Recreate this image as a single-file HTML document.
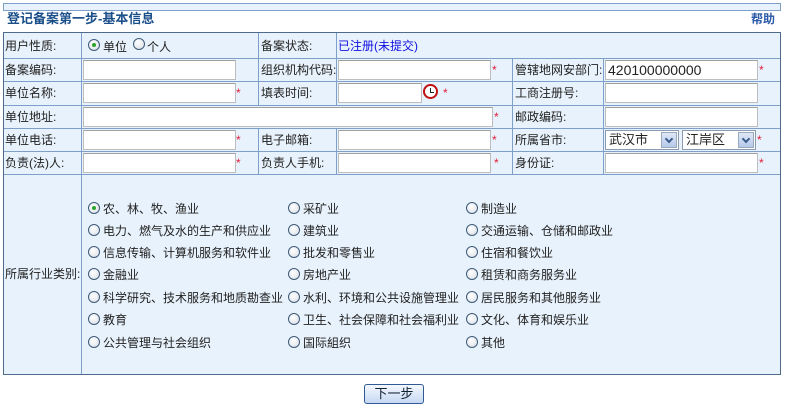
<!DOCTYPE html>
<html><head><meta charset="utf-8"><style>
*{margin:0;padding:0;box-sizing:border-box}
body{width:786px;height:406px;background:#fff;position:relative;font-family:"Liberation Sans","Noto Sans CJK SC","WenQuanYi Zen Hei",sans-serif;font-size:12px;color:#222;overflow:hidden}
.a{position:absolute;white-space:nowrap}
.l{position:absolute;line-height:14px}
.in{position:absolute;height:20px;background:#fff;border:1px solid #bdbdbd;border-top-color:#a0a0a0}
.s{position:absolute;color:#e0203a;font-size:12px}
.r{position:absolute;width:12px;height:12px;border-radius:50%;border:1px solid #3d5a7a;background:radial-gradient(circle at 40% 35%,#fff,#d8dde4)}
.r.on::after{content:"";position:absolute;left:3px;top:3px;width:4px;height:4px;border-radius:50%;background:#2aa52a}
.vl{position:absolute;width:1px;background:#7d9fc9}
.hl{position:absolute;height:1px;background:#7d9fc9}
.sel{position:absolute;height:20px;background:#fff;border:1px solid #8a9bb0;font-size:13px;padding-left:3px;line-height:18px}
.sel i{position:absolute;right:1px;top:1px;width:16px;height:16px;background:linear-gradient(#dfe8f7,#b5c8ea);border:1px solid #9ab}
.sel i::after{content:"";position:absolute;left:4px;top:3px;width:4px;height:4px;border-right:2px solid #3a5a8a;border-bottom:2px solid #3a5a8a;transform:rotate(45deg)}
</style></head><body>
<div class="a" style="left:3px;top:3px;width:778px;height:8px;background:#e8f2fc;border:1px solid #7d9fc9"></div>
<div class="a" style="left:7px;top:8px;font-weight:bold;color:#1b4f8a;font-size:13px">登记备案第一步-基本信息</div>
<div class="a" style="left:751px;top:10px;font-weight:bold;color:#2a5aa8;font-size:12px">帮助</div>

<div class="a" style="left:3px;top:32px;width:778px;height:343px;background:#e8f2fc;border:1px solid #4f6b8c"></div>
<div class="hl" style="left:4px;top:58px;width:776px"></div>
<div class="hl" style="left:4px;top:81px;width:776px"></div>
<div class="hl" style="left:4px;top:105px;width:776px"></div>
<div class="hl" style="left:4px;top:128px;width:776px"></div>
<div class="hl" style="left:4px;top:151px;width:776px"></div>
<div class="hl" style="left:4px;top:174px;width:776px"></div>
<div class="vl" style="left:81px;top:33px;height:341px"></div>
<div class="vl" style="left:258px;top:33px;height:72px"></div>
<div class="vl" style="left:336px;top:33px;height:72px"></div>
<div class="vl" style="left:258px;top:128px;height:46px"></div>
<div class="vl" style="left:336px;top:128px;height:46px"></div>
<div class="vl" style="left:512px;top:58px;height:116px"></div>
<div class="vl" style="left:603px;top:58px;height:116px"></div>

<div class="l" style="left:5px;top:39px">用户性质:</div>
<div class="r on" style="left:88px;top:39px"></div><div class="l" style="left:103px;top:40px">单位</div>
<div class="r" style="left:133px;top:38px"></div><div class="l" style="left:147px;top:40px">个人</div>
<div class="l" style="left:261px;top:39px">备案状态:</div>
<div class="l" style="left:338px;top:39px;color:#1010e0">已注册(未提交)</div>

<div class="l" style="left:5px;top:63px">备案编码:</div>
<div class="in" style="left:83px;top:60px;width:153px"></div>
<div class="l" style="left:261px;top:63px">组织机构代码:</div>
<div class="in" style="left:338px;top:60px;width:153px"></div><div class="s" style="left:492px;top:63px">*</div>
<div class="l" style="left:515px;top:63px">管辖地网安部门:</div>
<div class="in" style="left:605px;top:60px;width:153px;font-size:14px;line-height:18px;padding-left:2px">420100000000</div><div class="s" style="left:759px;top:63px">*</div>

<div class="l" style="left:5px;top:86px">单位名称:</div>
<div class="in" style="left:83px;top:83px;width:153px"></div><div class="s" style="left:236px;top:86px">*</div>
<div class="l" style="left:261px;top:86px">填表时间:</div>
<div class="in" style="left:338px;top:83px;width:84px"></div>
<div class="a" style="left:423px;top:84px;width:15px;height:15px;border-radius:50%;border:2px solid #c01010;background:#fff"><div style="position:absolute;left:5px;top:2px;width:1px;height:5px;background:#222"></div><div style="position:absolute;left:5px;top:6px;width:4px;height:1px;background:#222"></div></div>
<div class="s" style="left:443px;top:86px">*</div>
<div class="l" style="left:515px;top:86px">工商注册号:</div>
<div class="in" style="left:605px;top:83px;width:153px"></div>

<div class="l" style="left:5px;top:110px">单位地址:</div>
<div class="in" style="left:83px;top:107px;width:410px"></div><div class="s" style="left:494px;top:110px">*</div>
<div class="l" style="left:515px;top:110px">邮政编码:</div>
<div class="in" style="left:605px;top:107px;width:153px"></div>

<div class="l" style="left:5px;top:133px">单位电话:</div>
<div class="in" style="left:83px;top:130px;width:153px"></div><div class="s" style="left:236px;top:133px">*</div>
<div class="l" style="left:261px;top:133px">电子邮箱:</div>
<div class="in" style="left:338px;top:130px;width:153px"></div><div class="s" style="left:492px;top:133px">*</div>
<div class="l" style="left:515px;top:133px">所属省市:</div>
<div class="sel" style="left:605px;top:130px;width:74px">武汉市<i></i></div>
<div class="sel" style="left:682px;top:130px;width:74px">江岸区<i></i></div><div class="s" style="left:757px;top:133px">*</div>

<div class="l" style="left:5px;top:156px">负责(法)人:</div>
<div class="in" style="left:83px;top:153px;width:153px"></div><div class="s" style="left:236px;top:156px">*</div>
<div class="l" style="left:261px;top:156px">负责人手机:</div>
<div class="in" style="left:338px;top:153px;width:153px"></div><div class="s" style="left:494px;top:156px">*</div>
<div class="l" style="left:515px;top:156px">身份证:</div>
<div class="in" style="left:605px;top:153px;width:153px"></div><div class="s" style="left:759px;top:156px">*</div>

<div class="l" style="left:5px;top:267px">所属行业类别:</div>

<div class="r on" style="left:88px;top:202px"></div><div class="l" style="left:103px;top:202px">农、林、牧、渔业</div>
<div class="r" style="left:288px;top:202px"></div><div class="l" style="left:303px;top:202px">采矿业</div>
<div class="r" style="left:466px;top:202px"></div><div class="l" style="left:481px;top:202px">制造业</div>

<div class="r" style="left:88px;top:224px"></div><div class="l" style="left:103px;top:224px">电力、燃气及水的生产和供应业</div>
<div class="r" style="left:288px;top:224px"></div><div class="l" style="left:303px;top:224px">建筑业</div>
<div class="r" style="left:466px;top:224px"></div><div class="l" style="left:481px;top:224px">交通运输、仓储和邮政业</div>

<div class="r" style="left:88px;top:246px"></div><div class="l" style="left:103px;top:246px">信息传输、计算机服务和软件业</div>
<div class="r" style="left:288px;top:246px"></div><div class="l" style="left:303px;top:246px">批发和零售业</div>
<div class="r" style="left:466px;top:246px"></div><div class="l" style="left:481px;top:246px">住宿和餐饮业</div>

<div class="r" style="left:88px;top:268px"></div><div class="l" style="left:103px;top:268px">金融业</div>
<div class="r" style="left:288px;top:268px"></div><div class="l" style="left:303px;top:268px">房地产业</div>
<div class="r" style="left:466px;top:268px"></div><div class="l" style="left:481px;top:268px">租赁和商务服务业</div>

<div class="r" style="left:88px;top:291px"></div><div class="l" style="left:103px;top:291px">科学研究、技术服务和地质勘查业</div>
<div class="r" style="left:288px;top:291px"></div><div class="l" style="left:303px;top:291px">水利、环境和公共设施管理业</div>
<div class="r" style="left:466px;top:291px"></div><div class="l" style="left:481px;top:291px">居民服务和其他服务业</div>

<div class="r" style="left:88px;top:313px"></div><div class="l" style="left:103px;top:313px">教育</div>
<div class="r" style="left:288px;top:313px"></div><div class="l" style="left:303px;top:313px">卫生、社会保障和社会福利业</div>
<div class="r" style="left:466px;top:313px"></div><div class="l" style="left:481px;top:313px">文化、体育和娱乐业</div>

<div class="r" style="left:88px;top:336px"></div><div class="l" style="left:103px;top:336px">公共管理与社会组织</div>
<div class="r" style="left:288px;top:336px"></div><div class="l" style="left:303px;top:336px">国际組织</div>
<div class="r" style="left:466px;top:336px"></div><div class="l" style="left:481px;top:336px">其他</div>

<div class="a" style="left:364px;top:384px;width:60px;height:20px;border:1px solid #2f5a94;border-radius:3px;background:linear-gradient(#f4f8ff,#c6d8f2);text-align:center;line-height:17px;font-size:13px;color:#123">下一步</div>
</body></html>
